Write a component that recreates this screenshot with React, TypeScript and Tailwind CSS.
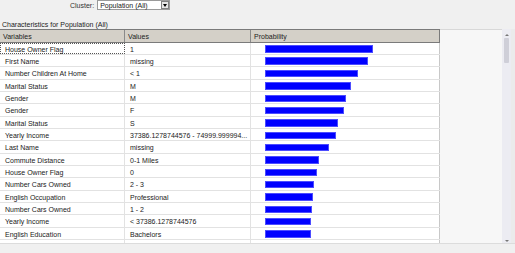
import React from 'react';

// Characteristics rows: variable, value, bar end (px from bar start)
const rows: { variable: string; value: string; bar: number }[] = [
  { variable: 'House Owner Flag', value: '1', bar: 108 },
  { variable: 'First Name', value: 'missing', bar: 103 },
  { variable: 'Number Children At Home', value: '< 1', bar: 93 },
  { variable: 'Marital Status', value: 'M', bar: 86 },
  { variable: 'Gender', value: 'M', bar: 81 },
  { variable: 'Gender', value: 'F', bar: 79 },
  { variable: 'Marital Status', value: 'S', bar: 73 },
  { variable: 'Yearly Income', value: '37386.1278744576 - 74999.999994...', bar: 71 },
  { variable: 'Last Name', value: 'missing', bar: 64 },
  { variable: 'Commute Distance', value: '0-1 Miles', bar: 54 },
  { variable: 'House Owner Flag', value: '0', bar: 52 },
  { variable: 'Number Cars Owned', value: '2 - 3', bar: 49 },
  { variable: 'English Occupation', value: 'Professional', bar: 48 },
  { variable: 'Number Cars Owned', value: '1 - 2', bar: 47 },
  { variable: 'Yearly Income', value: '< 37386.1278744576', bar: 46 },
  { variable: 'English Education', value: 'Bachelors', bar: 46 },
  { variable: 'English Education', value: 'Partial College', bar: 44 },
];

export default function App() {
  return (
    <div
      className="relative h-[253px] w-[515px] overflow-hidden bg-[#f0f0f0] text-[7px] leading-none text-[#1a1a1a]"
      style={{ fontFamily: '"Liberation Sans", Arial, sans-serif' }}
    >
      {/* Cluster selector */}
      <div className="flex h-[10px] items-center pl-[70px]">
        <span className="text-[#333]">Cluster:</span>
        <div className="ml-[3px] flex h-[10px] w-[73px] items-stretch border border-[#9a9a9a] bg-white">
          <span className="flex-1 pl-[2px] pt-[1px]">Population (All)</span>
          <div className="flex w-[8px] items-center justify-center border border-[#808080] bg-[#e6e6e6]">
            <div className="h-0 w-0 border-x-[2px] border-t-[3px] border-x-transparent border-t-black" />
          </div>
        </div>
      </div>

      <div className="h-[19px] pl-[2px] pt-[11px] text-[#222]">Characteristics for Population (All)</div>

      {/* Grid + scrollbar */}
      <div className="flex h-[214px]">
        <div className="w-[440px] overflow-hidden bg-white">
          <div className="grid h-[13.65px] grid-cols-[125px_126px_189px] border-y border-y-[#7a7a7a] bg-[#d4d0c8] text-[#222]">
            <div className="border-r border-[#8a8a8a] pl-[3px] pt-[3px]">Variables</div>
            <div className="border-r border-[#8a8a8a] pl-[3px] pt-[3px]">Values</div>
            <div className="border-r border-[#7a7a7a] pl-[3px] pt-[3px]">Probability</div>
          </div>
          {rows.map((r, i) => (
            <div
              key={i}
              className="grid h-[12.35px] grid-cols-[125px_126px_189px] border-b border-[#e2e2e2]"
            >
              <div
                className={
                  i === 0
                    ? 'border border-dotted border-[#555] pl-[4px] pt-[2px]'
                    : 'border-r border-[#e2e2e2] pl-[5px] pt-[3px]'
                }
              >
                {r.variable}
              </div>
              <div className="border-r border-[#e2e2e2] pl-[5px] pt-[3px]">{r.value}</div>
              <div className="border-r border-[#c8c8c8] pl-[14px] pt-[2.5px]">
                <div
                  className="h-[7.5px] border border-[#4c4cff] bg-[#0000ff]"
                  style={{ width: r.bar }}
                />
              </div>
            </div>
          ))}
        </div>
        <div className="flex-1 border-t border-[#d8d8d8] bg-[#f7f7f7]" />
        {/* vertical scrollbar */}
        <div className="flex w-[9px] flex-col items-center bg-[#ececf2]">
          <div className="mt-[5px] h-0 w-0 border-x-[2.5px] border-b-[2.5px] border-x-transparent border-b-[#777]" />
          <div className="mt-[2px] h-[25px] w-[5px] rounded-[1px] bg-[#cfcfd8]" />
          <div className="flex-1" />
          <div className="mb-[1px] h-0 w-0 border-x-[2.5px] border-t-[2.5px] border-x-transparent border-t-[#777]" />
        </div>
        <div className="w-[4px] bg-[#ebebeb]" />
      </div>
      <div className="h-[10px] border-t border-[#dcdcdc] bg-[#f0f0f0]" />
    </div>
  );
}
